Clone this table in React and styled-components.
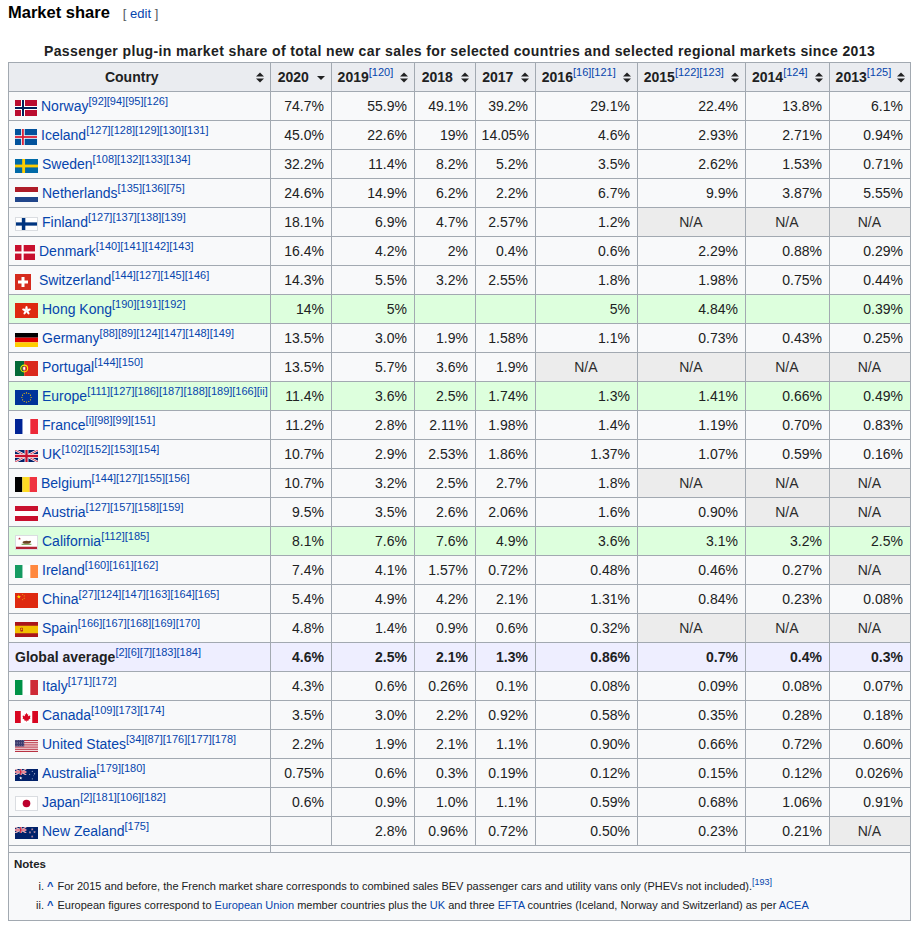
import React from 'react';
import styled, { createGlobalStyle } from 'styled-components';

const GlobalStyle = createGlobalStyle`
  html, body {
    margin: 0;
    padding: 0;
    background: #fff;
  }
  body {
    font-family: "Liberation Sans", Arial, sans-serif;
    color: #202122;
  }
`;

const Page = styled.div`
  padding: 0 9px 0 8px;
`;

const Heading = styled.h3`
  margin: 0;
  font-size: 16.5px;
  font-weight: bold;
  line-height: 24px;
  color: #000;
`;

const EditLinks = styled.span`
  margin-left: 13px;
  font-size: 13px;
  line-height: 1;
  font-weight: normal;
  color: #54595d;
`;

const Link = styled.a`
  color: #0645ad;
  text-decoration: none;
`;

const Table = styled.table`
  margin-top: 16px;
  width: 902px;
  table-layout: fixed;
  border-collapse: collapse;
  background: #f8f9fa;
  color: #202122;
  border: 1px solid #a2a9b1;
  font-size: 14px;
  line-height: 22.4px;
`;

const Caption = styled.caption`
  font-weight: bold;
  line-height: 22.4px;
  letter-spacing: 0.38px;
  padding: 0;
  color: #202122;
`;

const HeadCell = styled.th`
  background: #eaecf0;
  border: 1px solid #a2a9b1;
  padding: 2.8px 0 2.8px 5.6px;
  font-weight: bold;
  white-space: nowrap;
`;

const HeadInner = styled.div`
  display: flex;
  align-items: center;
`;

const HeadLabel = styled.span`
  flex: 1;
  text-align: center;
`;

const SortSlot = styled.span`
  width: 21px;
  display: flex;
  justify-content: center;
  align-items: center;
`;

const Row = styled.tr`
  background: ${(p) => (p.$tone === 'green' ? '#dfd' : p.$tone === 'avg' ? '#eef' : 'transparent')};
  font-weight: ${(p) => (p.$tone === 'avg' ? 'bold' : 'normal')};
`;

const Cell = styled.td`
  border: 1px solid #a2a9b1;
  padding: 2.8px 7px 2.8px 5.6px;
  text-align: right;
  white-space: nowrap;
`;

const NaCell = styled(Cell)`
  background: #ececec;
  color: #2c2c2c;
  text-align: center;
`;

const CountryCell = styled(Cell)`
  text-align: left;
  padding-left: 6px;
`;

const FlagBox = styled.span`
  display: inline-block;
  vertical-align: middle;
  line-height: 0;
  margin-right: ${(p) => p.$gap}px;
`;

const FlagSvg = styled.svg`
  display: block;
  box-sizing: border-box;
  border: ${(p) => (p.$edge ? '1px solid #dadde1' : 'none')};
`;

const Sup = styled.sup`
  font-size: ${(p) => (p.$small ? '9px' : '11px')};
  line-height: ${(p) => (p.$small ? 0 : 1)};
  vertical-align: super;
  font-weight: normal;
  color: #0645ad;
`;

const SpacerCell = styled.td`
  border: 1px solid #a2a9b1;
  height: 6px;
  padding: 0;
`;

const NotesCell = styled.td`
  border: 1px solid #a2a9b1;
  padding: 2px 5px 5px;
  text-align: left;
`;

const NotesTitle = styled.div`
  font-weight: bold;
  font-size: 11.5px;
  line-height: 18px;
`;

const NoteList = styled.ol`
  margin: 4px 0 0;
  padding-left: 33px;
  list-style: lower-roman;
  font-size: 11px;
  line-height: 19px;
`;

const BackLink = styled(Link)`
  font-weight: bold;
  margin-right: 4px;
`;

const star = (cx, cy, r) => {
  const pts = [];
  for (let i = 0; i < 10; i++) {
    const a = ((-90 + i * 36) * Math.PI) / 180;
    const rr = i % 2 ? r * 0.4 : r;
    pts.push(`${(cx + rr * Math.cos(a)).toFixed(2)},${(cy + rr * Math.sin(a)).toFixed(2)}`);
  }
  return pts.join(' ');
};

const hBands = (a, b, c) => (
  <>
    <rect width="9" height="2" fill={a} />
    <rect y="2" width="9" height="2" fill={b} />
    <rect y="4" width="9" height="2" fill={c} />
  </>
);

const vBands = (a, b, c) => (
  <>
    <rect width="3" height="6" fill={a} />
    <rect x="3" width="3" height="6" fill={b} />
    <rect x="6" width="3" height="6" fill={c} />
  </>
);

const union = (
  <>
    <rect width="60" height="30" fill="#012169" />
    <path d="M0,0 L60,30 M60,0 L0,30" stroke="#fff" strokeWidth="6" />
    <path d="M0,0 L60,30 M60,0 L0,30" stroke="#C8102E" strokeWidth="2" />
    <path d="M30,0 v30 M0,15 h60" stroke="#fff" strokeWidth="10" />
    <path d="M30,0 v30 M0,15 h60" stroke="#C8102E" strokeWidth="6" />
  </>
);

const FLAGS = {
  no: { w: 22, h: 16, vb: '0 0 22 16', body: (
    <>
      <rect width="22" height="16" fill="#ba0c2f" />
      <rect x="6" width="4" height="16" fill="#fff" />
      <rect y="6" width="22" height="4" fill="#fff" />
      <rect x="7" width="2" height="16" fill="#00205b" />
      <rect y="7" width="22" height="2" fill="#00205b" />
    </>
  ) },
  is: { w: 22, h: 16, vb: '0 0 25 18', body: (
    <>
      <rect width="25" height="18" fill="#02529c" />
      <rect x="7" width="4" height="18" fill="#fff" />
      <rect y="7" width="25" height="4" fill="#fff" />
      <rect x="8" width="2" height="18" fill="#dc1e35" />
      <rect y="8" width="25" height="2" fill="#dc1e35" />
    </>
  ) },
  se: { w: 23, h: 14, vb: '0 0 16 10', body: (
    <>
      <rect width="16" height="10" fill="#006aa7" />
      <rect x="5" width="2" height="10" fill="#fecc00" />
      <rect y="4" width="16" height="2" fill="#fecc00" />
    </>
  ) },
  nl: { w: 23, h: 15, vb: '0 0 9 6', body: hBands('#ae1c28', '#fff', '#21468b') },
  fi: { w: 23, h: 14, vb: '0 0 18 11', edge: true, body: (
    <>
      <rect width="18" height="11" fill="#fff" />
      <rect x="5" width="3" height="11" fill="#003580" />
      <rect y="4" width="18" height="3" fill="#003580" />
    </>
  ) },
  dk: { w: 20, h: 15, vb: '0 0 37 28', body: (
    <>
      <rect width="37" height="28" fill="#c8102e" />
      <rect x="12" width="4" height="28" fill="#fff" />
      <rect y="12" width="37" height="4" fill="#fff" />
    </>
  ) },
  ch: { w: 16, h: 16, vb: '0 0 32 32', gap: 8, body: (
    <>
      <rect width="32" height="32" fill="#d52b1e" />
      <rect x="13" y="6" width="6" height="20" fill="#fff" />
      <rect x="6" y="13" width="20" height="6" fill="#fff" />
    </>
  ) },
  hk: { w: 23, h: 15, vb: '0 0 23 15', body: (
    <>
      <rect width="23" height="15" fill="#de2910" />
      {[0, 72, 144, 216, 288].map((r) => (
        <ellipse key={r} cx="11.5" cy="5.2" rx="1.2" ry="2.3" fill="#fff" transform={`rotate(${r} 11.5 7.5)`} />
      ))}
    </>
  ) },
  de: { w: 23, h: 14, vb: '0 0 9 6', body: hBands('#000', '#dd0000', '#ffce00') },
  pt: { w: 23, h: 15, vb: '0 0 30 20', body: (
    <>
      <rect width="12" height="20" fill="#046a38" />
      <rect x="12" width="18" height="20" fill="#da291c" />
      <circle cx="12" cy="10" r="4.5" fill="none" stroke="#ffe900" strokeWidth="1.4" />
      <rect x="10.2" y="7.6" width="3.6" height="4.6" rx="1" fill="#fff" stroke="#da291c" strokeWidth="0.8" />
    </>
  ) },
  eu: { w: 23, h: 15, vb: '0 0 23 15', body: (
    <>
      <rect width="23" height="15" fill="#039" />
      {Array.from({ length: 12 }).map((_, i) => {
        const a = (i * 30 * Math.PI) / 180;
        return <circle key={i} cx={11.5 + 4.6 * Math.cos(a)} cy={7.5 + 4.6 * Math.sin(a)} r="0.6" fill="#fc0" />;
      })}
    </>
  ) },
  fr: { w: 23, h: 15, vb: '0 0 9 6', body: vBands('#002395', '#fff', '#ed2939') },
  uk: { w: 23, h: 12, vb: '0 0 60 30', body: union },
  be: { w: 22, h: 15, vb: '0 0 9 6', body: vBands('#000', '#fdda24', '#ef3340') },
  at: { w: 23, h: 15, vb: '0 0 9 6', body: hBands('#c8102e', '#fff', '#c8102e') },
  ca_us: { w: 23, h: 15, vb: '0 0 30 20', edge: true, body: (
    <>
      <rect width="30" height="20" fill="#fff" />
      <rect y="16.5" width="30" height="3.5" fill="#b22234" />
      <polygon points={star(5, 4, 2.2)} fill="#b22234" />
      <rect x="8" y="12" width="14" height="1.4" fill="#5a8f29" />
      <ellipse cx="15" cy="9.6" rx="5.6" ry="2.4" fill="#6b4423" />
      <ellipse cx="20" cy="8.6" rx="1.6" ry="1.3" fill="#6b4423" />
    </>
  ) },
  ie: { w: 23, h: 13, vb: '0 0 9 6', body: vBands('#169b62', '#fff', '#ff883e') },
  cn: { w: 23, h: 15, vb: '0 0 30 20', body: (
    <>
      <rect width="30" height="20" fill="#de2910" />
      <polygon points={star(5, 5, 3)} fill="#ffde00" />
      <polygon points={star(10, 2, 1)} fill="#ffde00" />
      <polygon points={star(12, 4, 1)} fill="#ffde00" />
      <polygon points={star(12, 7, 1)} fill="#ffde00" />
      <polygon points={star(10, 9, 1)} fill="#ffde00" />
    </>
  ) },
  es: { w: 23, h: 15, vb: '0 0 30 20', body: (
    <>
      <rect width="30" height="20" fill="#aa151b" />
      <rect y="5" width="30" height="10" fill="#f1bf00" />
      <rect x="7" y="7.5" width="3.4" height="5" rx="0.8" fill="#aa151b" />
      <rect x="7.8" y="8.5" width="1.8" height="2.4" fill="#f1bf00" />
    </>
  ) },
  it: { w: 23, h: 15, vb: '0 0 9 6', body: vBands('#009246', '#fff', '#ce2b37') },
  ca: { w: 23, h: 12, vb: '0 0 40 20', body: (
    <>
      <rect width="40" height="20" fill="#d80621" />
      <rect x="10" width="20" height="20" fill="#fff" />
      <polygon
        points="20,3 21.5,6 23,5.5 22.5,9 25,7 25.5,8.5 27,8 26,11 27,12 23,15 23.5,16.5 20.5,16 20.5,18 19.5,18 19.5,16 16.5,16.5 17,15 13,12 14,11 13,8 14.5,8.5 15,7 17.5,9 17,5.5 18.5,6"
        fill="#d80621"
      />
    </>
  ) },
  us: { w: 23, h: 12, vb: '0 0 38 20', body: (
    <>
      <rect width="38" height="20" fill="#fff" />
      {Array.from({ length: 7 }).map((_, i) => (
        <rect key={i} y={(i * 2 * 20) / 13} width="38" height={20 / 13} fill="#b22234" />
      ))}
      <rect width="15.2" height={(20 * 7) / 13} fill="#3c3b6e" />
      {Array.from({ length: 20 }).map((_, i) => (
        <circle key={i} cx={1.6 + (i % 5) * 3} cy={1.4 + Math.floor(i / 5) * 2.4} r="0.45" fill="#fff" />
      ))}
    </>
  ) },
  au: { w: 23, h: 12, vb: '0 0 40 20', body: (
    <>
      <rect width="40" height="20" fill="#012169" />
      <svg width="20" height="10" viewBox="0 0 60 30">{union}</svg>
      <polygon points={star(10, 15, 3)} fill="#fff" />
      <polygon points={star(30, 4, 1.4)} fill="#fff" />
      <polygon points={star(25.5, 9, 1.4)} fill="#fff" />
      <polygon points={star(34, 8, 1.4)} fill="#fff" />
      <polygon points={star(30, 16.5, 1.4)} fill="#fff" />
      <polygon points={star(32, 11.5, 0.8)} fill="#fff" />
    </>
  ) },
  jp: { w: 23, h: 15, vb: '0 0 23 15', edge: true, body: (
    <>
      <rect width="23" height="15" fill="#fff" />
      <circle cx="11.5" cy="7.5" r="4.2" fill="#bc002d" />
    </>
  ) },
  nz: { w: 23, h: 12, vb: '0 0 40 20', body: (
    <>
      <rect width="40" height="20" fill="#012169" />
      <svg width="20" height="10" viewBox="0 0 60 30">{union}</svg>
      {[[30, 4], [26, 9], [34, 8.5], [30, 16]].map(([x, y]) => (
        <polygon key={`${x}-${y}`} points={star(x, y, 1.6)} fill="#c8102e" stroke="#fff" strokeWidth="0.5" />
      ))}
    </>
  ) },
};

const Flag = ({ code }) => {
  const f = FLAGS[code];
  return (
    <FlagBox $gap={f.gap || 4}>
      <FlagSvg $edge={f.edge} width={f.w} height={f.h} viewBox={f.vb} preserveAspectRatio="none">
        {f.body}
      </FlagSvg>
    </FlagBox>
  );
};

const SortIcon = ({ down }) => (
  <svg width="8" height="11" viewBox="0 0 8 11">
    {!down && <polygon points="0,4.5 4,0.5 8,4.5" fill="#202122" />}
    <polygon points={down ? '0,4 8,4 4,8' : '0,6.5 8,6.5 4,10.5'} fill="#202122" />
  </svg>
);

const Refs = ({ list }) => (list && list.length ? <Sup>{list.map((r) => `[${r}]`).join('')}</Sup> : null);

const COLUMNS = [
  { label: 'Country', width: 262 },
  { label: '2020', width: 61, sorted: true },
  { label: '2019', width: 83, refs: ['120'] },
  { label: '2018', width: 61 },
  { label: '2017', width: 60 },
  { label: '2016', width: 102, refs: ['16', '121'] },
  { label: '2015', width: 108, refs: ['122', '123'] },
  { label: '2014', width: 84, refs: ['124'] },
  { label: '2013', width: 81, refs: ['125'] },
];

const NA = 'N/A';

const ROWS = [
  { name: 'Norway', flag: 'no', refs: [92, 94, 95, 126], v: ['74.7%', '55.9%', '49.1%', '39.2%', '29.1%', '22.4%', '13.8%', '6.1%'] },
  { name: 'Iceland', flag: 'is', refs: [127, 128, 129, 130, 131], v: ['45.0%', '22.6%', '19%', '14.05%', '4.6%', '2.93%', '2.71%', '0.94%'] },
  { name: 'Sweden', flag: 'se', refs: [108, 132, 133, 134], v: ['32.2%', '11.4%', '8.2%', '5.2%', '3.5%', '2.62%', '1.53%', '0.71%'] },
  { name: 'Netherlands', flag: 'nl', refs: [135, 136, 75], v: ['24.6%', '14.9%', '6.2%', '2.2%', '6.7%', '9.9%', '3.87%', '5.55%'] },
  { name: 'Finland', flag: 'fi', refs: [127, 137, 138, 139], v: ['18.1%', '6.9%', '4.7%', '2.57%', '1.2%', NA, NA, NA] },
  { name: 'Denmark', flag: 'dk', refs: [140, 141, 142, 143], v: ['16.4%', '4.2%', '2%', '0.4%', '0.6%', '2.29%', '0.88%', '0.29%'] },
  { name: 'Switzerland', flag: 'ch', refs: [144, 127, 145, 146], v: ['14.3%', '5.5%', '3.2%', '2.55%', '1.8%', '1.98%', '0.75%', '0.44%'] },
  { name: 'Hong Kong', flag: 'hk', refs: [190, 191, 192], tone: 'green', v: ['14%', '5%', '', '', '5%', '4.84%', '', '0.39%'] },
  { name: 'Germany', flag: 'de', refs: [88, 89, 124, 147, 148, 149], v: ['13.5%', '3.0%', '1.9%', '1.58%', '1.1%', '0.73%', '0.43%', '0.25%'] },
  { name: 'Portugal', flag: 'pt', refs: [144, 150], v: ['13.5%', '5.7%', '3.6%', '1.9%', NA, NA, NA, NA] },
  { name: 'Europe', flag: 'eu', refs: [111, 127, 186, 187, 188, 189, 166, 'ii'], tone: 'green', v: ['11.4%', '3.6%', '2.5%', '1.74%', '1.3%', '1.41%', '0.66%', '0.49%'] },
  { name: 'France', flag: 'fr', refs: ['i', 98, 99, 151], v: ['11.2%', '2.8%', '2.11%', '1.98%', '1.4%', '1.19%', '0.70%', '0.83%'] },
  { name: 'UK', flag: 'uk', refs: [102, 152, 153, 154], v: ['10.7%', '2.9%', '2.53%', '1.86%', '1.37%', '1.07%', '0.59%', '0.16%'] },
  { name: 'Belgium', flag: 'be', refs: [144, 127, 155, 156], v: ['10.7%', '3.2%', '2.5%', '2.7%', '1.8%', NA, NA, NA] },
  { name: 'Austria', flag: 'at', refs: [127, 157, 158, 159], v: ['9.5%', '3.5%', '2.6%', '2.06%', '1.6%', '0.90%', NA, NA] },
  { name: 'California', flag: 'ca_us', refs: [112, 185], tone: 'green', v: ['8.1%', '7.6%', '7.6%', '4.9%', '3.6%', '3.1%', '3.2%', '2.5%'] },
  { name: 'Ireland', flag: 'ie', refs: [160, 161, 162], v: ['7.4%', '4.1%', '1.57%', '0.72%', '0.48%', '0.46%', '0.27%', NA] },
  { name: 'China', flag: 'cn', refs: [27, 124, 147, 163, 164, 165], v: ['5.4%', '4.9%', '4.2%', '2.1%', '1.31%', '0.84%', '0.23%', '0.08%'] },
  { name: 'Spain', flag: 'es', refs: [166, 167, 168, 169, 170], v: ['4.8%', '1.4%', '0.9%', '0.6%', '0.32%', NA, NA, NA] },
  { name: 'Global average', refs: [2, 6, 7, 183, 184], tone: 'avg', v: ['4.6%', '2.5%', '2.1%', '1.3%', '0.86%', '0.7%', '0.4%', '0.3%'] },
  { name: 'Italy', flag: 'it', refs: [171, 172], v: ['4.3%', '0.6%', '0.26%', '0.1%', '0.08%', '0.09%', '0.08%', '0.07%'] },
  { name: 'Canada', flag: 'ca', refs: [109, 173, 174], v: ['3.5%', '3.0%', '2.2%', '0.92%', '0.58%', '0.35%', '0.28%', '0.18%'] },
  { name: 'United States', flag: 'us', refs: [34, 87, 176, 177, 178], v: ['2.2%', '1.9%', '2.1%', '1.1%', '0.90%', '0.66%', '0.72%', '0.60%'] },
  { name: 'Australia', flag: 'au', refs: [179, 180], v: ['0.75%', '0.6%', '0.3%', '0.19%', '0.12%', '0.15%', '0.12%', '0.026%'] },
  { name: 'Japan', flag: 'jp', refs: [2, 181, 106, 182], v: ['0.6%', '0.9%', '1.0%', '1.1%', '0.59%', '0.68%', '1.06%', '0.91%'] },
  { name: 'New Zealand', flag: 'nz', refs: [175], v: ['', '2.8%', '0.96%', '0.72%', '0.50%', '0.23%', '0.21%', NA] },
];

export default function App() {
  return (
    <Page>
      <GlobalStyle />
      <Heading>
        Market share
        <EditLinks>
          [ <Link href="#">edit</Link> ]
        </EditLinks>
      </Heading>

      <Table>
        <Caption>
          Passenger plug-in market share of total new car sales for selected countries and selected regional markets since 2013
        </Caption>
        <colgroup>
          {COLUMNS.map((c) => (
            <col key={c.label} style={{ width: c.width }} />
          ))}
        </colgroup>
        <thead>
          <tr>
            {COLUMNS.map((c) => (
              <HeadCell key={c.label}>
                <HeadInner>
                  <HeadLabel>
                    {c.label}
                    <Refs list={c.refs} />
                  </HeadLabel>
                  <SortSlot>
                    <SortIcon down={c.sorted} />
                  </SortSlot>
                </HeadInner>
              </HeadCell>
            ))}
          </tr>
        </thead>
        <tbody>
          {ROWS.map((r) => (
            <Row key={r.name} $tone={r.tone}>
              <CountryCell>
                {r.flag && <Flag code={r.flag} />}
                {r.flag ? <Link href="#">{r.name}</Link> : r.name}
                <Refs list={r.refs} />
              </CountryCell>
              {r.v.map((val, i) =>
                val === NA ? <NaCell key={i}>{NA}</NaCell> : <Cell key={i}>{val}</Cell>
              )}
            </Row>
          ))}
        </tbody>
        <tfoot>
          <tr>
            <SpacerCell />
            <SpacerCell colSpan={6} />
            <SpacerCell colSpan={2} />
          </tr>
          <tr>
            <NotesCell colSpan={9}>
              <NotesTitle>Notes</NotesTitle>
              <NoteList>
                <li>
                  <BackLink href="#">^</BackLink>
                  For 2015 and before, the French market share corresponds to combined sales BEV passenger cars and
                  utility vans only (PHEVs not included).
                  <Sup $small>[193]</Sup>
                </li>
                <li>
                  <BackLink href="#">^</BackLink>
                  European figures correspond to <Link href="#">European Union</Link> member countries plus the{' '}
                  <Link href="#">UK</Link> and three <Link href="#">EFTA</Link> countries (Iceland, Norway and
                  Switzerland) as per <Link href="#">ACEA</Link>
                </li>
              </NoteList>
            </NotesCell>
          </tr>
        </tfoot>
      </Table>
    </Page>
  );
}
